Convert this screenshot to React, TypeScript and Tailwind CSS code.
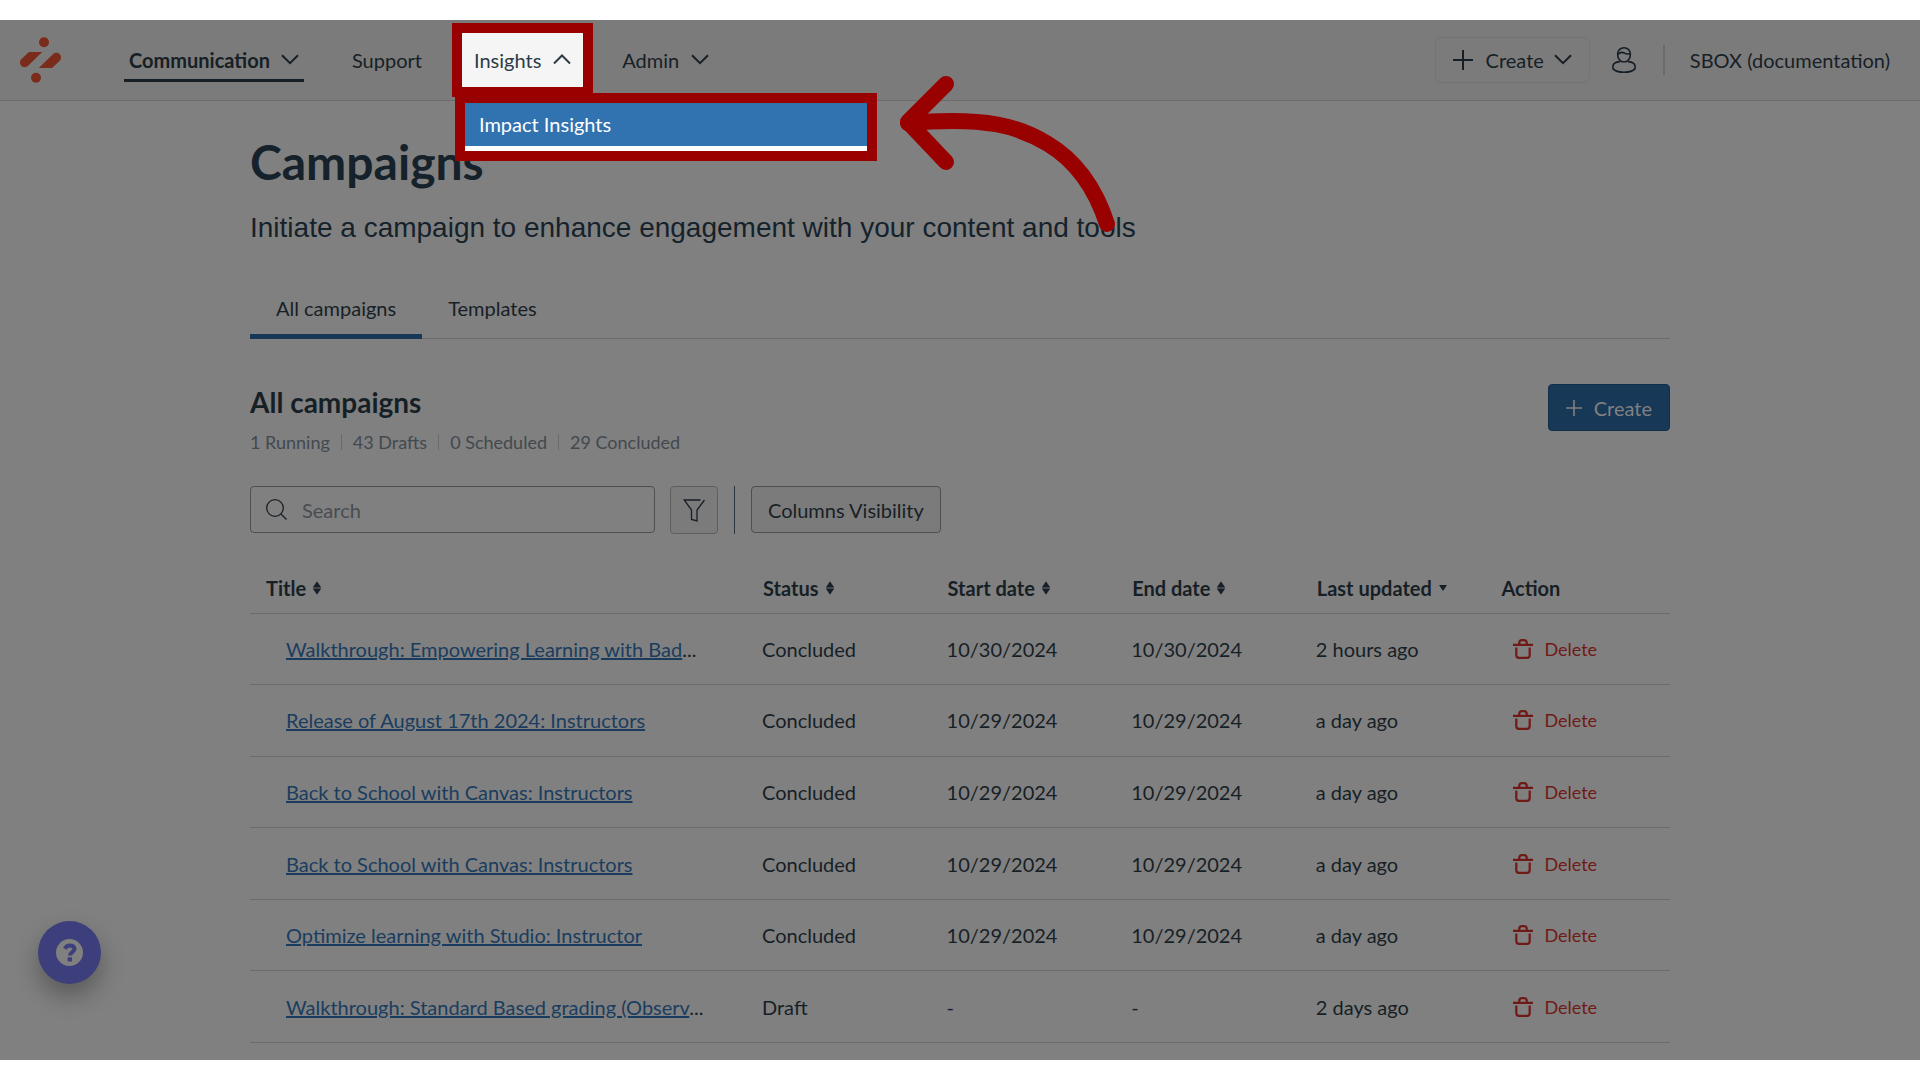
import { clsx } from 'clsx';

type Campaign = {
  id: number;
  title: string;
  truncated?: boolean;
  status: string;
  start: string;
  end: string;
  updated: string;
};

const campaigns: Campaign[] = [
  { id: 1, title: 'Walkthrough: Empowering Learning with Bad', truncated: true, status: 'Concluded', start: '10/30/2024', end: '10/30/2024', updated: '2 hours ago' },
  { id: 2, title: 'Release of August 17th 2024: Instructors', status: 'Concluded', start: '10/29/2024', end: '10/29/2024', updated: 'a day ago' },
  { id: 3, title: 'Back to School with Canvas: Instructors', status: 'Concluded', start: '10/29/2024', end: '10/29/2024', updated: 'a day ago' },
  { id: 4, title: 'Back to School with Canvas: Instructors', status: 'Concluded', start: '10/29/2024', end: '10/29/2024', updated: 'a day ago' },
  { id: 5, title: 'Optimize learning with Studio: Instructor', status: 'Concluded', start: '10/29/2024', end: '10/29/2024', updated: 'a day ago' },
  { id: 6, title: 'Walkthrough: Standard Based grading (Observ', truncated: true, status: 'Draft', start: '-', end: '-', updated: '2 days ago' },
];

const stats = ['1 Running', '43 Drafts', '0 Scheduled', '29 Concluded'];

const columns = [
  { label: 'Title', sort: 'both', width: 'w-[35%]' },
  { label: 'Status', sort: 'both', width: 'w-[13%]' },
  { label: 'Start date', sort: 'both', width: 'w-[13%]' },
  { label: 'End date', sort: 'both', width: 'w-[13%]' },
  { label: 'Last updated', sort: 'down', width: 'w-[13%]' },
  { label: 'Action', sort: 'none', width: 'w-[13%]' },
];

function Chevron({ up = false }: { up?: boolean }) {
  return (
    <svg viewBox="0 0 18 12" className="w-[18px] h-3" fill="none" stroke="currentColor" strokeWidth="2">
      <path d={up ? 'M1 9.500 9 1.500l8 8' : 'M1 1.200l8 8 8-8'} />
    </svg>
  );
}

function Plus({ className }: { className: string }) {
  return (
    <svg viewBox="0 0 20 20" className={className} fill="none" stroke="currentColor">
      <path d="M10 0v20M0 10h20" />
    </svg>
  );
}

function Logo() {
  return (
    <svg viewBox="0 0 41 46" className="w-[41px] h-[46px]" fill="#7a2c1b">
      <circle cx="24" cy="5.2" r="5" />
      <circle cx="16" cy="40.8" r="5" />
      <path d="M9 15h13.2L8.4 28.6c-2 2-5 2.1-6.900.3-2-1.900-2-5 0-6.900z" />
      <path d="M32 31H18.800L32.600 17.400c2-2 5-2.100 6.900-.3 2 1.900 2 5 0 6.900z" />
    </svg>
  );
}

function SortIcon({ sort }: { sort: string }) {
  if (sort === 'none') return null;
  return (
    <svg viewBox="0 0 10 14" className="w-[10px] h-[14px]" fill="currentColor">
      {sort === 'both' ? <path d="M5 .8l3.700 5.400H1.300zM5 13.200l3.700-5.400H1.300z" stroke="currentColor" strokeWidth=".6" strokeLinejoin="round" /> : <path d="M1 4h8l-4 6z" />}
    </svg>
  );
}

function TrashIcon() {
  return (
    <svg viewBox="0 0 20 20" className="w-5 h-5" fill="none" stroke="currentColor" strokeWidth="2.200">
      <path d="M0 5.800h20M6.200 5.500V4.300C6.200 2.300 7.200 1.100 9 1.100h2c1.800 0 2.800 1.200 2.800 3.200v1.200" />
      <path d="M3.300 8.500v7.500c0 1.800 1 2.800 2.700 2.800h8c1.700 0 2.700-1 2.700-2.800V8.500" />
    </svg>
  );
}

function Header() {
  return (
    <header className="flex items-center h-[81px] pl-5 pr-[30px] bg-[#7b7b7b] border-b border-[#6b6b6b]">
      <a href="#home" aria-label="Home">
        <Logo />
      </a>
      <nav className="flex items-center gap-[43px] ml-[63px]">
        <button className="flex items-center gap-[11px] h-[43px] pt-[2px] mt-px px-[5px] font-bold border-b-3 border-[#171f26]">
          Communication
          <Chevron />
        </button>
        <a href="#support" className="px-[5px]">Support</a>
        <div className="relative -mx-2">
          <button className="relative flex items-center gap-3 h-[54px] px-3 bg-[#f5f5f5] text-[#2d3b45] outline-[10px] outline-[#990000]">
            Insights
            <Chevron up />
          </button>
          <div className="absolute left-[-7px] top-[60px] z-10 w-[422px] border-[10px] border-[#990000] bg-white pb-[5px]">
            <a href="#impact-insights" className="flex items-center h-[43px] px-[14px] pb-[2px] bg-[#3172b0] text-white">
              Impact Insights
            </a>
          </div>
        </div>
        <button className="flex items-center gap-3 px-1">
          Admin
          <Chevron />
        </button>
      </nav>
      <div className="flex items-center ml-auto">
        <button className="flex items-center h-[46px] px-[17px] border border-[#737373] rounded-md">
          <Plus className="w-5 h-5 stroke-2" />
          <span className="ml-[13px] mr-[10px]">Create</span>
          <Chevron />
        </button>
        <button aria-label="Account" className="ml-[22px]">
          <svg viewBox="0 0 24 26" className="w-6 h-[26px]" fill="none" stroke="currentColor" strokeWidth="1.600">
            <path d="M8 14.600C3.500 15 .9 17 .9 19.600v2C3 24 7.500 25.200 12 25.200s9-1.200 11.100-3.600v-2c0-2.600-2.600-4.600-7.100-5" />
            <path d="M12 .8C8.200.8 5.600 3.400 5.600 7.200c0 4.500 2.800 7.800 6.400 7.800s6.400-3.300 6.400-7.800C18.400 3.400 15.800.8 12 .8z" />
            <path d="M5.900 7.500c2-2.200 4.200-2.500 6.200-1.500 2 1 4 1.300 6.100.6" />
          </svg>
        </button>
        <div className="w-[2px] h-[30px] ml-[27px] mr-[25px] bg-[#6b6b6b]" />
        <span>SBOX (documentation)</span>
      </div>
    </header>
  );
}

function CampaignTable() {
  return (
    <table className="w-full h-[479px] mt-[30px] table-fixed border-collapse text-left">
      <thead>
        <tr className="h-[49px] border-b border-[#6c6c6c]">
          {columns.map(col => (
            <th key={col.label} className={clsx('pl-4 font-bold', col.width)}>
              <span className="flex items-center gap-[6px]">
                {col.label}
                <SortIcon sort={col.sort} />
              </span>
            </th>
          ))}
        </tr>
      </thead>
      <tbody>
        {campaigns.map(c => (
          <tr key={c.id} className="border-b border-[#6c6c6c]">
            <td className="pl-9 whitespace-nowrap">
              <a href={`#campaign-${c.id}`} className="text-[#1a3d5f] underline">{c.title}</a>
              {c.truncated && '...'}
            </td>
            <td className="pl-[15px]">{c.status}</td>
            <td className="pl-[15px]">{c.start}</td>
            <td className="pl-[15px]">{c.end}</td>
            <td className="pl-[15px]">{c.updated}</td>
            <td className="pl-7">
              <button className="flex items-center gap-[11px] text-lg text-[#701a16]">
                <TrashIcon />
                Delete
              </button>
            </td>
          </tr>
        ))}
      </tbody>
    </table>
  );
}

export default function App() {
  return (
    <div className="bg-white py-5">
      <div className="relative bg-[#808080] pb-[17px] font-['Lato',sans-serif] text-xl text-[#171f26]">
        <Header />

        <main className="max-w-[1420px] mx-auto">
          <h1 className="pt-[31px] text-[48px] leading-[60px] font-bold text-[#15222b]">Campaigns</h1>
          <p className="mt-[18px] font-['Liberation_Sans',Arial,sans-serif] text-[28px] leading-9 text-[#15222b]">
            Initiate a campaign to enhance engagement with your content and tools
          </p>

          <div role="tablist" className="flex mt-[39px] border-b border-[#6c6c6c]">
            <button role="tab" aria-selected="true" className="h-[54px] px-[26px] pb-1 -mb-px border-b-5 border-[#183857]">
              All campaigns
            </button>
            <button role="tab" aria-selected="false" className="h-[54px] px-[26px] pb-1 -mb-px border-b-5 border-transparent">
              Templates
            </button>
          </div>

          <div className="flex justify-between items-start mt-[45px]">
            <div>
              <h2 className="text-[28px] leading-9 font-bold">All campaigns</h2>
              <ul className="flex mt-[10px] text-lg leading-6 text-[#42494f]">
                {stats.map((stat, i) => (
                  <li key={stat} className="flex items-center">
                    {i > 0 && <span className="w-px h-4 mx-[11px] bg-[#6b6b6b]" />}
                    {stat}
                  </li>
                ))}
              </ul>
            </div>
            <button className="flex items-center gap-3 h-[47px] px-[17px] rounded bg-[#183857] text-[#808080] border border-[#142f49]">
              <Plus className="w-4 h-4 stroke-2" />
              Create
            </button>
          </div>

          <div className="flex items-start mt-[32px]">
            <label className="flex items-center w-[405px] h-[47px] pl-[15px] border border-[#4b5055] rounded">
              <svg viewBox="0 0 21 21" className="w-[21px] h-[21px]" fill="none" stroke="currentColor" strokeWidth="1.300">
                <circle cx="9" cy="9" r="8.300" />
                <path d="M15 15l5.500 5.500" />
              </svg>
              <input type="text" aria-label="Search" placeholder="Search" className="flex-1 min-w-0 ml-[15px] outline-none placeholder:text-[#474d52]" />
            </label>
            <button aria-label="Filter" className="flex items-center justify-center w-12 h-12 ml-[15px] bg-[#7b7b7b] border border-[#5c5f62] rounded">
              <svg viewBox="0 0 22 23" className="w-[22px] h-[23px]" fill="none" stroke="currentColor" strokeWidth="1.300">
                <path d="M17.500 1H1.200L8.500 11v9.500l5.500 1.500V11L21.500 1" />
              </svg>
            </button>
            <div className="w-px h-12 mx-4 bg-[#2d353c]" />
            <button className="h-[47px] px-4 bg-[#7b7b7b] border border-[#4b5055] rounded">Columns Visibility</button>
          </div>

          <CampaignTable />
        </main>

        {/* callout arrow pointing at the open menu */}
        <svg viewBox="0 0 220 160" className="absolute left-[898px] top-[54px] w-[220px] h-[160px] pointer-events-none" fill="none" stroke="#990000" strokeWidth="16" strokeLinecap="round" strokeLinejoin="round">
          <path d="M48 10 10 48l38 40" />
          <path d="M10 49C90 42 122 53 150 70c30 18 48 46 59 80" />
        </svg>

        <button aria-label="Help" className="absolute left-[38px] bottom-[76px] flex items-center justify-center w-[63px] h-[63px] rounded-full bg-[#3d3f7c] shadow-[0_12px_24px_rgba(0,0,0,0.3)]">
          <svg viewBox="0 0 27 27" className="w-[27px] h-[27px]">
            <circle cx="13.500" cy="13.500" r="13.500" fill="#808080" />
            <path d="M8.800 9.800C10 7.500 11.600 6.500 13.800 6.500c2.800 0 4.700 1.400 4.700 3.500 0 3-4.600 3.200-4.600 6.600" fill="none" stroke="#3d3f7c" strokeWidth="4" />
            <rect x="11.600" y="18.300" width="4.400" height="4.200" rx=".6" fill="#3d3f7c" />
          </svg>
        </button>
      </div>
    </div>
  );
}
